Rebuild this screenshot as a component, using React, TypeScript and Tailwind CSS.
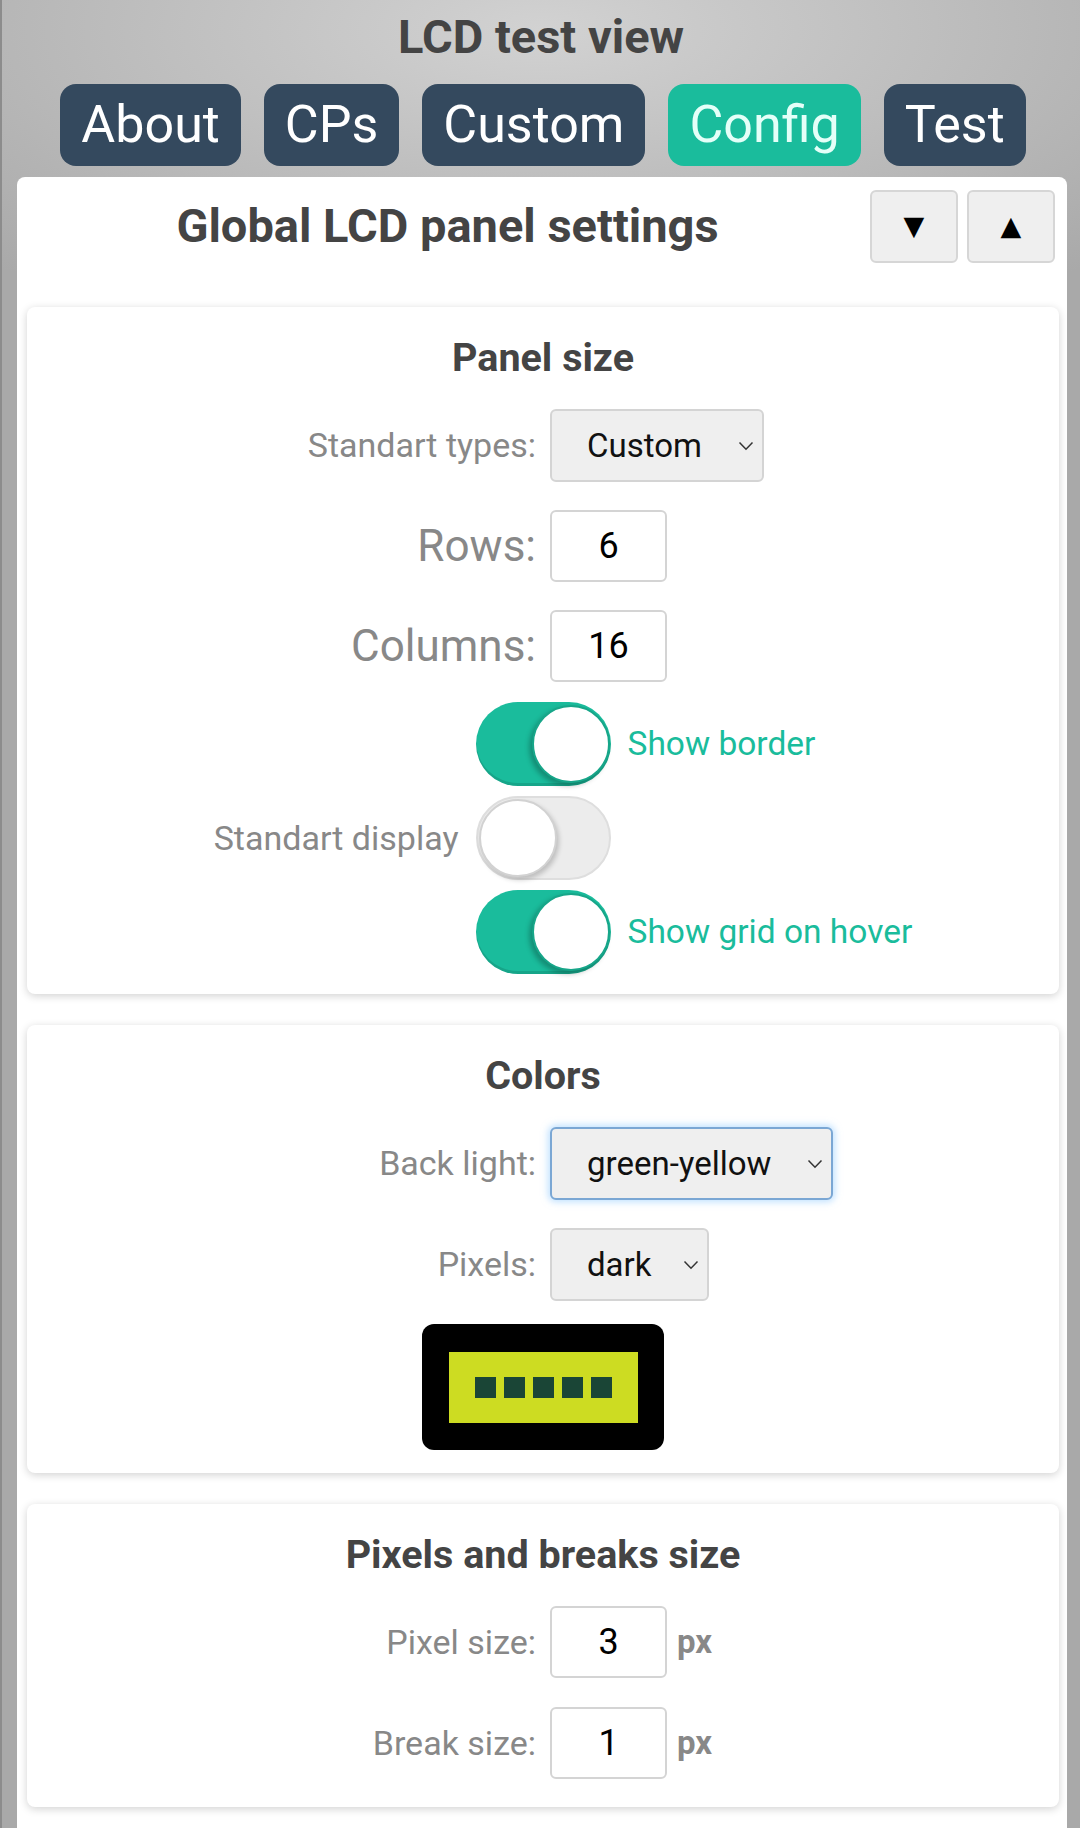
import React from "react"

const tabs = [
  { label: "About", active: false },
  { label: "CPs", active: false },
  { label: "Custom", active: false },
  { label: "Config", active: true },
  { label: "Test", active: false },
]

function Chevron() {
  return (
    <svg width="16" height="10" viewBox="0 0 16 10" className="shrink-0">
      <path d="M1.5 1.5 L8 8.2 L14.5 1.5" stroke="#333" strokeWidth="1.5" fill="none" />
    </svg>
  )
}

function FakeSelect({ value, className }: { value: string; className: string }) {
  return (
    <div className={`flex h-[73px] items-center justify-between rounded-[6px] bg-[#efefef] pl-[35px] pr-[8px] text-[33px] text-[#111] ${className}`}>
      <span>{value}</span>
      <Chevron />
    </div>
  )
}

function NumInput({ value }: { value: string }) {
  return (
    <div className="flex h-[72px] w-[117px] items-center justify-center rounded-[6px] border-2 border-[#d4d4d4] bg-white text-[36px] text-black">
      {value}
    </div>
  )
}

function Toggle({ on }: { on: boolean }) {
  return (
    <div
      className={`relative h-[84px] w-[135px] rounded-full ${
        on
          ? "bg-[#1abc9c] shadow-[inset_0_-3px_0_rgba(0,0,0,0.12)]"
          : "border-2 border-[#dedede] bg-[#ececec]"
      }`}
    >
      {on ? (
        <div className="absolute right-[1px] top-[3px] h-[78px] w-[78px] rounded-full border-2 border-[#17a689] bg-white shadow-[-3px_3px_5px_rgba(0,0,0,0.25)]" />
      ) : (
        <div className="absolute left-[1px] top-[1px] h-[78px] w-[78px] rounded-full border-2 border-[#d2d2d2] bg-white shadow-[2px_3px_5px_rgba(0,0,0,0.2)]" />
      )}
    </div>
  )
}

function Card({ title, className, children }: { title: string; className: string; children: React.ReactNode }) {
  return (
    <div className={`rounded-[8px] bg-white pt-[26px] shadow-[0_2px_8px_rgba(0,0,0,0.18)] ${className}`}>
      <h2 className="mb-[26px] text-center text-[39.5px] font-bold leading-[50px] text-[#444]">{title}</h2>
      {children}
    </div>
  )
}

function Row({ label, big, children, className = "" }: { label: string; big?: boolean; children: React.ReactNode; className?: string }) {
  return (
    <div className={`grid grid-cols-2 items-center gap-x-[14px] ${className}`}>
      <span className={`text-right text-[#888] ${big ? "text-[44px]" : "text-[34px]"}`}>{label}</span>
      <div className="flex items-center gap-[10px]">{children}</div>
    </div>
  )
}

function ToggleRow({ on, left, right }: { on: boolean; left?: string; right?: string }) {
  return (
    <div className="grid grid-cols-[1fr_auto_1fr] items-center gap-x-[17px]">
      <span className="text-right text-[34px] text-[#888]">{left}</span>
      <Toggle on={on} />
      <span className="text-[33.5px] text-[#1abc9c]">{right}</span>
    </div>
  )
}

export default function App() {
  return (
    <div className="min-h-[1828px] overflow-hidden border-l-2 border-[#8c8c8c] bg-[radial-gradient(ellipse_75%_320px_at_50%_30px,#d2d2d2,#a9a9a9)] font-[Roboto,sans-serif]">
      <h1 className="pt-[10px] text-center text-[47px] font-bold leading-[54px] text-[#444]">LCD test view</h1>

      {/* tabs */}
      <div className="mt-[20px] flex justify-center gap-[23px] pl-[4px]">
        {tabs.map((t) => (
          <div
            key={t.label}
            className={`flex h-[82px] items-center rounded-[16px] px-[21px] text-[52px] leading-none ${
              t.active ? "bg-[#1abc9c] text-[#e4fff8]" : "bg-[#34495e] text-white"
            }`}
          >
            {t.label}
          </div>
        ))}
      </div>

      {/* settings panel */}
      <div className="ml-[15px] mr-[13px] mt-[11px] min-h-[1700px] rounded-t-[8px] bg-white pb-[20px]">
        <div className="flex items-center pt-[13px] pr-[12px]">
          <div className="flex-1 pl-[8px] text-center text-[47px] font-bold text-[#444]">Global LCD panel settings</div>
          <div className="flex gap-[9px]">
            <button className="flex h-[73px] w-[88px] items-center justify-center rounded-[6px] border-2 border-[#d6d6d6] bg-[#efefef] font-['DejaVu_Sans',sans-serif] text-[27px] text-black">
              ▼
            </button>
            <button className="flex h-[73px] w-[88px] items-center justify-center rounded-[6px] border-2 border-[#d6d6d6] bg-[#efefef] font-['DejaVu_Sans',sans-serif] text-[27px] text-black">
              ▲
            </button>
          </div>
        </div>

        <div className="mt-[44px] flex flex-col gap-[31px] pl-[10px] pr-[8px]">
          <Card title="Panel size" className="pb-[20px]">
            <Row label="Standart types:">
              <FakeSelect value="Custom" className="w-[214px] border-2 border-[#d4d4d4]" />
            </Row>
            <Row label="Rows:" big className="mt-[28px]">
              <NumInput value="6" />
            </Row>
            <Row label="Columns:" big className="mt-[28px]">
              <NumInput value="16" />
            </Row>
            <div className="mt-[20px] flex flex-col gap-[10px]">
              <ToggleRow on right="Show border" />
              <ToggleRow on={false} left="Standart display" />
              <ToggleRow on right="Show grid on hover" />
            </div>
          </Card>

          <Card title="Colors" className="pb-[23px]">
            <Row label="Back light:">
              <FakeSelect
                value="green-yellow"
                className="w-[283px] border-2 border-[#7ba7d4] shadow-[0_0_7px_2px_rgba(140,200,255,0.55)]"
              />
            </Row>
            <Row label="Pixels:" className="mt-[28px]">
              <FakeSelect value="dark" className="w-[159px] border-2 border-[#d4d4d4]" />
            </Row>
            <div className="mt-[23px] flex justify-center">
              <div className="flex h-[126px] w-[242px] items-center justify-center rounded-[12px] bg-black">
                <div className="flex h-[71px] w-[189px] items-center justify-center gap-[8px] bg-[#cddc22]">
                  {[0, 1, 2, 3, 4].map((i) => (
                    <div key={i} className="h-[21px] w-[21px] bg-[#1a4536]" />
                  ))}
                </div>
              </div>
            </div>
          </Card>

          <Card title="Pixels and breaks size" className="pb-[28px]">
            <Row label="Pixel size:">
              <NumInput value="3" />
              <span className="text-[33px] font-bold text-[#888]">px</span>
            </Row>
            <Row label="Break size:" className="mt-[29px]">
              <NumInput value="1" />
              <span className="text-[33px] font-bold text-[#888]">px</span>
            </Row>
          </Card>
        </div>
      </div>
    </div>
  )
}
